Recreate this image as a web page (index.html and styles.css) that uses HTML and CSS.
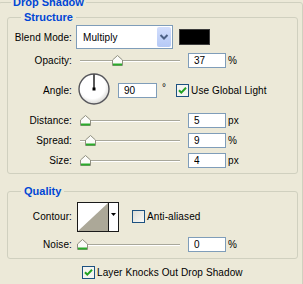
FILE: index.html
```html
<!DOCTYPE html>
<html lang="en">
  <head>
    <meta charset="UTF-8" />
    <title>Drop Shadow</title>
    <link rel="stylesheet" href="styles.css">
  </head>
  <body>
    <div class="panel">
      <fieldset class="group outer">
        <legend>Drop Shadow</legend>

        <fieldset class="group">
          <legend>Structure</legend>

          <div class="row row-blend">
            <span class="lbl">Blend Mode:</span>
            <div class="combo">
              <span class="combo-text">Multiply</span>
              <span class="combo-btn">
                <svg width="14" height="20" viewBox="0 0 14 20"><path d="M3.5 8 L7 11.5 L10.5 8" fill="none" stroke="#4d6185" stroke-width="2"/></svg>
              </span>
            </div>
            <span class="swatch"></span>
          </div>

          <div class="row">
            <span class="lbl">Opacity:</span>
            <div class="slider">
              <span class="thumb" style="left: 32px">
                <svg width="11" height="11" viewBox="0 0 11 11"><path d="M0.5 5 L5.5 0.5 L10.5 5 V10.5 H0.5 Z" fill="#fbfbf8" stroke="#8f8f80"/><path d="M1 9.5 H10" stroke="#2bab2b" stroke-width="2"/></svg>
              </span>
            </div>
            <input class="num" type="text" value="37" />
            <span class="unit">%</span>
          </div>

          <div class="row row-angle">
            <span class="lbl">Angle:</span>
            <svg class="dial" width="34" height="32" viewBox="0 0 34 32">
              <defs>
                <radialGradient id="dialFill" cx="0.45" cy="0.4" r="0.6">
                  <stop offset="0.7" stop-color="#ffffff"/>
                  <stop offset="1" stop-color="#d8d8d4"/>
                </radialGradient>
              </defs>
              <circle cx="17" cy="16" r="15" fill="url(#dialFill)" stroke="#55555a" stroke-width="1.4"/>
              <path d="M17 16 V1.5" stroke="#000" stroke-width="1.3"/>
              <rect x="15.5" y="14.5" width="3" height="3" fill="#000"/>
            </svg>
            <input class="num num-angle" type="text" value="90" />
            <span class="deg">°</span>
            <label class="check check-angle">
              <span class="box">
                <svg width="13" height="13" viewBox="0 0 13 13"><rect x="0.5" y="0.5" width="12" height="12" fill="#f4f4f0" stroke="#1c5180"/><path d="M3 6.2 L5.3 8.6 L10 3.8" fill="none" stroke="#21a121" stroke-width="2"/></svg>
              </span>
              Use Global Light
            </label>
          </div>

          <div class="row">
            <span class="lbl">Distance:</span>
            <div class="slider">
              <span class="thumb" style="left: 0px">
                <svg width="11" height="11" viewBox="0 0 11 11"><path d="M0.5 5 L5.5 0.5 L10.5 5 V10.5 H0.5 Z" fill="#fbfbf8" stroke="#8f8f80"/><path d="M1 9.5 H10" stroke="#2bab2b" stroke-width="2"/></svg>
              </span>
            </div>
            <input class="num" type="text" value="5" />
            <span class="unit">px</span>
          </div>

          <div class="row">
            <span class="lbl">Spread:</span>
            <div class="slider">
              <span class="thumb" style="left: 5px">
                <svg width="11" height="11" viewBox="0 0 11 11"><path d="M0.5 5 L5.5 0.5 L10.5 5 V10.5 H0.5 Z" fill="#fbfbf8" stroke="#8f8f80"/><path d="M1 9.5 H10" stroke="#2bab2b" stroke-width="2"/></svg>
              </span>
            </div>
            <input class="num" type="text" value="9" />
            <span class="unit">%</span>
          </div>

          <div class="row">
            <span class="lbl">Size:</span>
            <div class="slider">
              <span class="thumb" style="left: 0px">
                <svg width="11" height="11" viewBox="0 0 11 11"><path d="M0.5 5 L5.5 0.5 L10.5 5 V10.5 H0.5 Z" fill="#fbfbf8" stroke="#8f8f80"/><path d="M1 9.5 H10" stroke="#2bab2b" stroke-width="2"/></svg>
              </span>
            </div>
            <input class="num" type="text" value="4" />
            <span class="unit">px</span>
          </div>
        </fieldset>

        <fieldset class="group quality">
          <legend>Quality</legend>

          <div class="row row-contour">
            <span class="lbl">Contour:</span>
            <svg class="contour" width="42" height="30" viewBox="0 0 42 30">
              <rect x="0.5" y="0.5" width="41" height="29" fill="#fff" stroke="#1a1a1a"/>
              <polygon points="1,29 31,1 31,29" fill="#aca898"/>
              <path d="M31.5 0 V30" stroke="#1a1a1a"/>
              <polygon points="34,11 39,11 36.5,14" fill="#000"/>
            </svg>
            <label class="check check-aa">
              <span class="box">
                <svg width="13" height="13" viewBox="0 0 13 13"><defs><linearGradient id="boxFill" x1="0" y1="0" x2="1" y2="1"><stop offset="0" stop-color="#dcdcd5"/><stop offset="1" stop-color="#fafaf8"/></linearGradient></defs><rect x="0.5" y="0.5" width="12" height="12" fill="url(#boxFill)" stroke="#1c5180"/></svg>
              </span>
              Anti-aliased
            </label>
          </div>

          <div class="row row-noise">
            <span class="lbl">Noise:</span>
            <div class="slider slider-noise">
              <span class="thumb" style="left: 0px">
                <svg width="11" height="11" viewBox="0 0 11 11"><path d="M0.5 5 L5.5 0.5 L10.5 5 V10.5 H0.5 Z" fill="#fbfbf8" stroke="#8f8f80"/><path d="M1 9.5 H10" stroke="#2bab2b" stroke-width="2"/></svg>
              </span>
            </div>
            <input class="num" type="text" value="0" />
            <span class="unit">%</span>
          </div>
        </fieldset>

        <div class="knock">
          <label class="check">
            <span class="box">
              <svg width="13" height="13" viewBox="0 0 13 13"><rect x="0.5" y="0.5" width="12" height="12" fill="#f4f4f0" stroke="#1c5180"/><path d="M3 6.2 L5.3 8.6 L10 3.8" fill="none" stroke="#21a121" stroke-width="2"/></svg>
            </span>
            Layer Knocks Out Drop Shadow
          </label>
        </div>
      </fieldset>
    </div>
  </body>
</html>
```

FILE: styles.css
```css
* {
  box-sizing: border-box;
}

body {
  margin: 0;
  background: #ece9d8;
  font-family: 'Liberation Sans', Arial, sans-serif;
  font-size: 10px;
  letter-spacing: 0.1px;
  color: #000;
  overflow: hidden;
}

.panel {
  width: 303px;
  height: 284px;
  overflow: hidden;
}

.group {
  margin: 0;
  padding: 0 0 3px 0;
  min-width: 0;
  border: 1px solid #d0d0bf;
  border-radius: 3px;
}

.group > legend {
  color: #0046d5;
  font-weight: bold;
  font-size: 11px;
  letter-spacing: 0;
  line-height: 13px;
  padding: 0 3px;
  margin-left: 13px;
}

.outer {
  margin: -4px 0 0 -2px;
  width: 305px;
  height: 300px;
  padding: 2px 4px 0 8px;
}

.outer > legend {
  margin-left: 4px;
  padding: 0 2px;
}

.quality {
  margin-top: 11px;
  padding: 2px 0 4px 0;
}

.row {
  display: flex;
  align-items: center;
  height: 20px;
}

.row-blend {
  height: 26px;
}

.row-angle {
  height: 40px;
}

.row-contour {
  height: 33px;
}

.row-noise {
  margin-top: 1px;
}

.lbl {
  flex: none;
  width: 64px;
  text-align: right;
}

.combo {
  flex: none;
  display: flex;
  align-items: center;
  justify-content: space-between;
  margin-left: 4px;
  width: 97px;
  height: 24px;
  padding: 1px;
  border: 1px solid #7f9db9;
  background: #fff;
}

.combo-text {
  padding-left: 5px;
}

.combo-btn {
  display: block;
  width: 14px;
  height: 20px;
  border-radius: 2px;
  background: linear-gradient(#d3defc, #b5c9f6);
}

.combo-btn svg {
  display: block;
}

.swatch {
  flex: none;
  margin-left: 6px;
  width: 31px;
  height: 16px;
  background: #000;
  border: 1px solid #3c3c3c;
}

.slider {
  flex: none;
  position: relative;
  margin-left: 8px;
  width: 100px;
  height: 11px;
}

.slider::before {
  content: '';
  position: absolute;
  left: 0;
  right: 0;
  top: 5px;
  border-top: 1px solid #a8a79a;
  border-bottom: 1px solid #fff;
}

.slider-noise {
  margin-left: 5px;
  width: 103px;
}

.thumb {
  position: absolute;
  top: 0;
  width: 11px;
  height: 11px;
}

.thumb svg {
  display: block;
}

.num {
  flex: none;
  margin: 0 0 0 8px;
  width: 38px;
  height: 15px;
  padding: 0 5px;
  border: 1px solid #7f9db9;
  background: #fff;
  font: inherit;
  color: #000;
  outline: none;
}

.num-angle {
  margin-left: 7px;
  width: 39px;
}

.unit {
  margin-left: 2px;
}

.dial {
  flex: none;
  align-self: flex-start;
  margin: 3px 0 0 5px;
}

.deg {
  margin: 0 0 5px 5px;
}

.check {
  display: flex;
  align-items: center;
}

.check-angle {
  margin-left: 10px;
}

.check-aa {
  margin-left: 13px;
}

.box {
  flex: none;
  width: 13px;
  height: 13px;
  margin-right: 2px;
}

.box svg {
  display: block;
}

.contour {
  flex: none;
  margin-left: 5px;
}

.knock {
  display: flex;
  align-items: center;
  height: 14px;
  margin-top: 6px;
  padding-left: 75px;
}
```
